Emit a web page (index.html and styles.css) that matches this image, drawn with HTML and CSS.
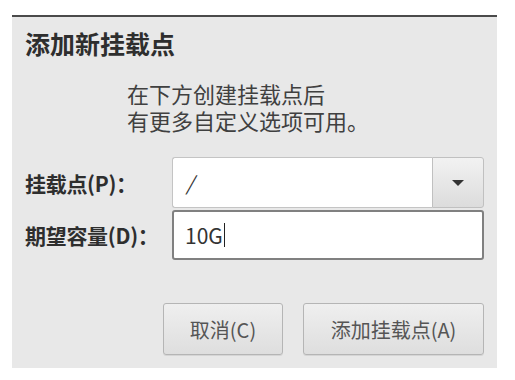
FILE: index.html
```html
<!DOCTYPE html>
<html lang="zh-CN">
<head>
<meta charset="utf-8">
<title>添加新挂载点</title>
<link rel="stylesheet" href="styles.css">
</head>
<body>
<div class="dialog">
  <h1 class="title">添加新挂载点</h1>
  <div class="desc">
    <div class="desc-line">在下方创建挂载点后</div>
    <div class="desc-line">有更多自定义选项可用。</div>
  </div>
  <div class="form">
    <label class="label">挂载点(P)：</label>
    <div class="combo">
      <div class="combo-entry">/</div>
      <div class="combo-btn">
        <svg width="14" height="8" viewBox="0 0 14 8"><path d="M1 1 L13 1 L7 7 Z" fill="#333"/></svg>
      </div>
    </div>
    <label class="label">期望容量(D)：</label>
    <div class="entry focused">10G<span class="caret"></span></div>
  </div>
  <div class="buttons">
    <button class="btn btn-cancel">取消(C)</button>
    <button class="btn btn-add">添加挂载点(A)</button>
  </div>
</div>
</body>
</html>
```

FILE: styles.css
```css
html, body {
  margin: 0;
  padding: 0;
  background: #ffffff;
}
body {
  font-family: "Noto Sans CJK SC", "Noto Sans", sans-serif;
  padding-top: 15px;
}
.dialog {
  margin-left: 12px;
  width: 485px;
  height: 353px;
  box-sizing: border-box;
  background: #e8e8e8;
  border-top: 2px solid #4a4a4a;
  padding: 10px 13px 0 13px;
  display: flex;
  flex-direction: column;
}
.title {
  margin: 0;
  font-size: 25px;
  line-height: 32px;
  font-weight: bold;
  color: #2e2e2e;
}
.desc {
  margin: 21px 0 0 0;
  padding-left: 102px;
  font-size: 22px;
  line-height: 27px;
  color: #404040;
}
.desc-line {
  height: 27px;
  white-space: nowrap;
}
.form {
  margin-top: 23px;
  display: grid;
  grid-template-columns: 147px 312px;
  grid-template-rows: 51px 50px;
  row-gap: 2px;
  align-items: center;
}
.label {
  font-size: 21px;
  font-weight: bold;
  color: #2e2e2e;
  white-space: nowrap;
  letter-spacing: -0.3px;
}
.combo {
  display: flex;
  height: 51px;
}
.combo-entry {
  flex: 1;
  box-sizing: border-box;
  background: #ffffff;
  border: 1px solid #c4c4c4;
  border-right: none;
  border-radius: 3px 0 0 3px;
  padding-left: 13px;
  font-size: 20px;
  line-height: 49px;
  color: #333;
  font-style: italic;
}
.combo-btn {
  width: 52px;
  box-sizing: border-box;
  border: 1px solid #c0c0c0;
  border-radius: 0 3px 3px 0;
  background: linear-gradient(#f2f2f2, #dcdcdc);
  display: flex;
  align-items: center;
  justify-content: center;
}
.entry {
  height: 50px;
  box-sizing: border-box;
  background: #ffffff;
  border: 2px solid #808080;
  border-radius: 3px;
  padding-left: 11px;
  font-size: 21px;
  line-height: 46px;
  color: #333;
  display: flex;
  align-items: center;
}
.caret {
  display: inline-block;
  width: 1px;
  height: 24px;
  background: #222;
  margin-left: 1px;
}
.buttons {
  margin-top: 43px;
  display: flex;
  justify-content: flex-end;
  gap: 20px;
}
.btn {
  height: 52px;
  box-sizing: border-box;
  border: 1px solid #b5b5b5;
  border-radius: 3px;
  background: linear-gradient(#efefef, #dedede);
  box-shadow: 0 1px 0 rgba(0,0,0,0.08);
  font-family: "Noto Sans CJK SC", "Noto Sans", sans-serif;
  font-size: 20px;
  color: #555;
  padding: 0;
}
.btn-cancel { width: 120px; }
.btn-add { width: 181px; }
```
